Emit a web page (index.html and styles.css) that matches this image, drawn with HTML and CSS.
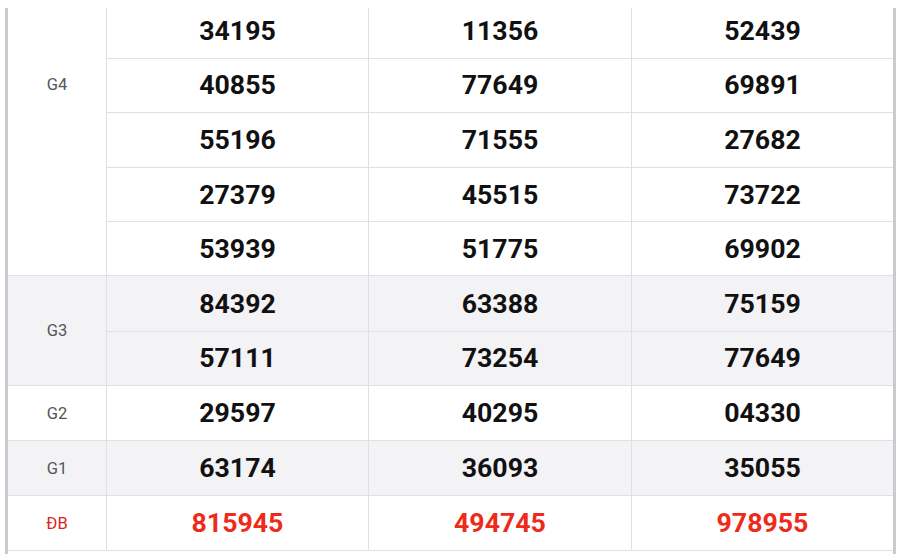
FILE: index.html
```html
<!DOCTYPE html>
<html lang="vi">
<head>
<meta charset="utf-8">
<title>Kết quả xổ số</title>
<link rel="stylesheet" href="styles.css">
</head>
<body>
<div class="viewport">
  <div class="table">
    <div class="group">
      <div class="label">G4</div>
      <div class="nums">
        <div class="row"><span></span><span></span><span></span></div>
        <div class="row"><span></span><span></span><span></span></div>
        <div class="row"><span>34195</span><span>11356</span><span>52439</span></div>
        <div class="row"><span>40855</span><span>77649</span><span>69891</span></div>
        <div class="row"><span>55196</span><span>71555</span><span>27682</span></div>
        <div class="row"><span>27379</span><span>45515</span><span>73722</span></div>
        <div class="row"><span>53939</span><span>51775</span><span>69902</span></div>
      </div>
    </div>
    <div class="group shade">
      <div class="label">G3</div>
      <div class="nums">
        <div class="row"><span>84392</span><span>63388</span><span>75159</span></div>
        <div class="row"><span>57111</span><span>73254</span><span>77649</span></div>
      </div>
    </div>
    <div class="group">
      <div class="label">G2</div>
      <div class="nums">
        <div class="row"><span>29597</span><span>40295</span><span>04330</span></div>
      </div>
    </div>
    <div class="group shade">
      <div class="label">G1</div>
      <div class="nums">
        <div class="row"><span>63174</span><span>36093</span><span>35055</span></div>
      </div>
    </div>
    <div class="group special">
      <div class="label">ĐB</div>
      <div class="nums">
        <div class="row"><span>815945</span><span>494745</span><span>978955</span></div>
      </div>
    </div>
  </div>
</div>
</body>
</html>
```

FILE: styles.css
```css
html, body {
  margin: 0;
  padding: 0;
  background: #ffffff;
}

body {
  font-family: Roboto, "Liberation Sans", Arial, sans-serif;
}

.viewport {
  margin: 8px 0 0 5px;
  width: 891px;
  height: 546px;
  overflow: hidden;
  box-sizing: border-box;
  border-left: 3px solid #cbcbcf;
  border-right: 3px solid #cbcbcf;
  background: #ffffff;
}

.table {
  margin-top: -114px;
  display: flex;
  flex-direction: column;
}

.group {
  display: flex;
  flex: none;
  border-bottom: 1px solid #e0dfe4;
}

.group.shade {
  background: #f3f2f5;
}

.label {
  width: 98px;
  flex: none;
  display: flex;
  align-items: center;
  justify-content: center;
  font-size: 16.5px;
  color: #555555;
}

.nums {
  flex: 1;
  display: flex;
  flex-direction: column;
}

.row {
  display: grid;
  flex: none;
  grid-template-columns: 262px 263px 262px;
  height: 54.56px;
  box-sizing: border-box;
}

.row:last-child {
  height: 54.1px;
}

.row + .row {
  border-top: 1px solid #e0dfe4;
}

.row span {
  display: flex;
  align-items: center;
  justify-content: center;
  border-left: 1px solid #e0dfe4;
  font-size: 26.7px;
  font-weight: 700;
  color: #111111;
}

.special .label {
  color: #d9261c;
}

.special .row span {
  color: #ee2a1b;
}
```
